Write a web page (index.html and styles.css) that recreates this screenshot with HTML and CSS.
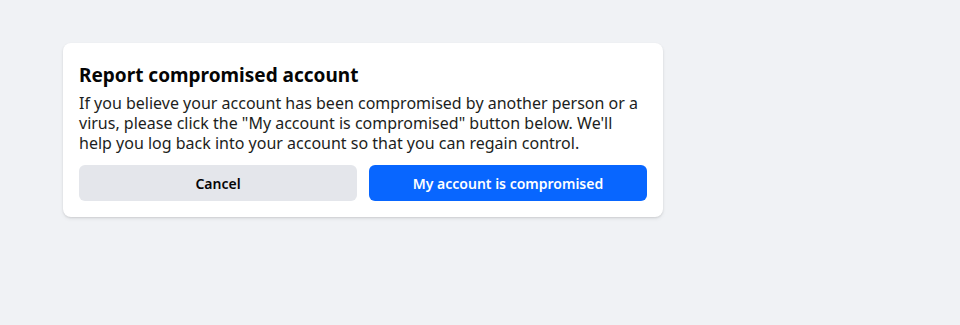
FILE: index.html
```html
<!DOCTYPE html>
<html lang="en">
<head>
<meta charset="utf-8">
<title>Report compromised account</title>
<link rel="stylesheet" href="styles.css">
</head>
<body>
<main class="page">
  <section class="card">
    <h1 class="card-title">Report compromised account</h1>
    <p class="card-text">If you believe your account has been compromised by another person or a virus, please click the "My account is compromised" button below. We'll help you log back into your account so that you can regain control.</p>
    <div class="actions">
      <button class="btn btn-secondary" type="button">Cancel</button>
      <button class="btn btn-primary" type="button">My account is compromised</button>
    </div>
  </section>
</main>
</body>
</html>
```

FILE: styles.css
```css
* { box-sizing: border-box; }
html, body {
  margin: 0;
  background: #f0f2f5;
  font-family: "Noto Sans", "Open Sans", sans-serif;
  color: #1c1e21;
}
.page {
  padding: 43px 0 0 63px;
  min-height: 325px;
}
.card {
  width: 600px;
  background: #fff;
  border-radius: 8px;
  box-shadow: 0 1px 2px rgba(0,0,0,0.1), 0 2px 4px rgba(0,0,0,0.06);
  padding: 20px 16px 16px;
}
.card-title {
  margin: 0;
  font-size: 19px;
  line-height: 24px;
  font-weight: 700;
  color: #050505;
}
.card-text {
  margin: 6px 0 12px;
  font-size: 16px;
  line-height: 20px;
  color: #1c1e21;
}
.actions {
  display: grid;
  grid-template-columns: 1fr 1fr;
  gap: 12px;
}
.btn {
  height: 36px;
  border: 0;
  border-radius: 6px;
  font-family: inherit;
  font-size: 14px;
  font-weight: 600;
  cursor: pointer;
}
.btn-secondary {
  background: #e4e6eb;
  color: #050505;
}
.btn-primary {
  background: #0866ff;
  color: #fff;
}
```
